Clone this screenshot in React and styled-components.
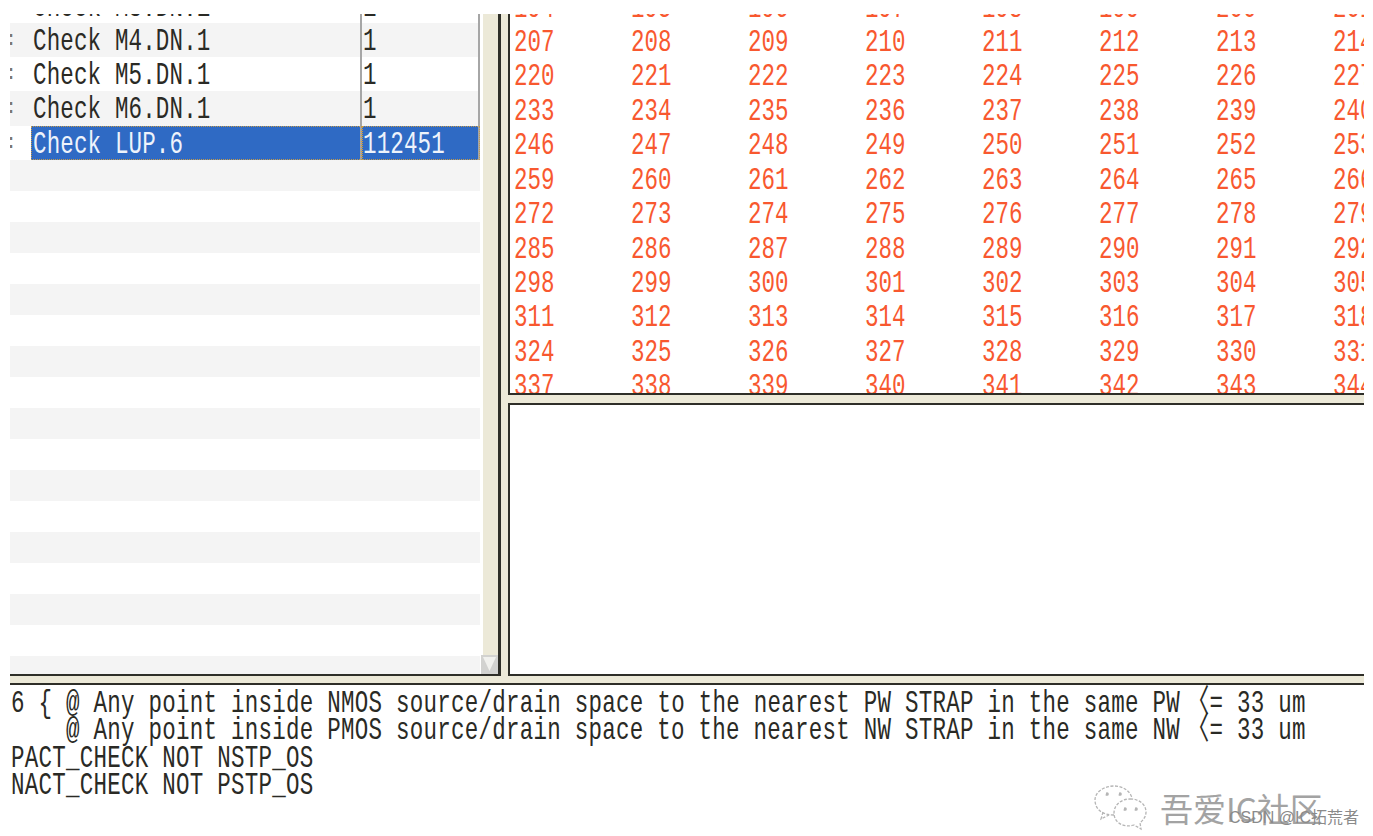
import React from 'react'
import styled, { createGlobalStyle } from 'styled-components'

const GlobalStyle = createGlobalStyle`
html, body { margin: 0; padding: 0; background: #fff; overflow: hidden; }
`

const MONO = `"Liberation Mono", "Noto Sans CJK SC", monospace`

const Page = styled.div`
position: relative;
width: 1373px;
height: 836px;
padding: 14px 9px 0 10px;
box-sizing: border-box;
font-family: ${MONO};
overflow: hidden;
`

const TopSplit = styled.div`
display: flex;
height: 662px;
`

const LeftPane = styled.div`
display: flex;
width: 488px;
border-right: 3px solid #2e2e28;
border-bottom: 2px solid #2e2e28;
flex: none;
`

const List = styled.div`
width: 470px;
margin-right: 3px;
overflow: hidden;
flex: none;
`

const ListInner = styled.div`
margin-top: -25.5px;
`

const Row = styled.div`
display: flex;
height: ${p => (p.$empty ? '31px' : '34.3px')};
background: ${p => (p.$striped ? '#f4f4f4' : '#fff')};
color: #2a2a25;
`

const RowHead = styled.div`
width: 21px;
flex: none;
overflow: hidden;
color: #77776f;
font-size: 20px;
line-height: 34px;
text-indent: -5px;
`

const Cell = styled.div`
box-sizing: border-box;
width: ${p => p.$w}px;
flex: none;
padding-left: ${p => p.$pad}px;
border-right: 2px solid #a6a6a6;
font-size: 22.5px;
letter-spacing: 0.15px;
line-height: 36px;
white-space: pre;
background: ${p => (p.$selected ? '#2f6ac4' : 'transparent')};
color: ${p => (p.$selected ? '#eef3fb' : 'inherit')};
outline: ${p => (p.$selected ? '1px dotted #c49a4a' : 'none')};
outline-offset: -1px;
`

const Tall = styled.span`
display: inline-block;
transform: scaleY(1.42);
`

const ScrollBar = styled.div`
width: 15px;
flex: none;
background: #ece9d8;
display: flex;
flex-direction: column;
justify-content: flex-end;
`

const ArrowButton = styled.div`
width: 17px;
height: 19px;
margin-left: -2px;
background: #e4e2da;
`

const Splitter = styled.div`
width: 7px;
flex: none;
background: #ece9d8;
`

const RightPane = styled.div`
flex: 1;
min-width: 0;
display: flex;
flex-direction: column;
`

const NumbersPane = styled.div`
height: 379px;
flex: none;
overflow: hidden;
border-left: 2px solid #2e2e28;
border-bottom: 2px solid #2e2e28;
`

const NumberGrid = styled.div`
display: grid;
grid-template-columns: repeat(13, 117px);
grid-auto-rows: 34.45px;
margin-top: -23.5px;
padding-left: 4px;
width: max-content;
`

const Num = styled.div`
color: #f8582f;
font-size: 22.5px;
line-height: 34px;
`

const HSplit = styled.div`
height: ${p => p.$h}px;
flex: none;
background: #ece9d8;
`

const DetailPane = styled.div`
flex: 1;
border-top: 2px solid #2e2e28;
border-left: 2px solid #2e2e28;
border-bottom: 2px solid #2e2e28;
`

const Output = styled.div`
border-top: 2px solid #2e2e28;
padding: 6px 0 0 1px;
color: #2a2a25;
font-size: 22.5px;
letter-spacing: 0.25px;
`

const Line = styled.div`
height: 27.4px;
line-height: 27.4px;
white-space: pre;
`

const Bracket = styled.span`
margin-left: -7px;
`

const Watermark = styled.div`
position: absolute;
left: 1094px;
top: 785px;
display: flex;
align-items: center;
gap: 13px;
color: #a3a3a3;
`

const WatermarkText = styled.span`
font-family: "Noto Sans CJK SC", sans-serif;
font-size: 33px;
line-height: 42px;
white-space: nowrap;
`

const Credit = styled.div`
position: absolute;
left: 1229px;
top: 807px;
font-family: "Liberation Sans", "Noto Sans CJK SC", sans-serif;
font-size: 16px;
line-height: 22px;
color: #8a8a8a;
white-space: nowrap;
`

const rows = [
  { name: 'Check M3.DN.1', value: '1' },
  { name: 'Check M4.DN.1', value: '1', striped: true },
  { name: 'Check M5.DN.1', value: '1' },
  { name: 'Check M6.DN.1', value: '1', striped: true },
  { name: 'Check LUP.6', value: '112451', selected: true },
]

const numbers = Array.from({ length: 13 * 12 }, (_, i) => 194 + i)
const emptyRows = Array.from({ length: 17 }, (_, i) => i)

const ArrowIcon = () => (
  <svg width="17" height="19" viewBox="0 0 17 19">
    <rect x="0" y="0" width="17" height="19" fill="#d2d2d0" />
    <polygon points="2,2 15,2 8.5,16" fill="#f1f1ee" />
  </svg>
)

const WeChatIcon = () => (
  <svg width="53" height="46" viewBox="0 0 53 46" fill="none" stroke="#b5b5b5" strokeWidth="1.3" strokeDasharray="3 1.5">
    <path d="M20 30 C8 30 1 24 1 15 C1 7 10 1 20 1 C29 1 36 6 38 13" />
    <path d="M9 27 L7 34 L15 30" />
    <path d="M36 14 C46 14 52 20 52 27 C52 32 49 35 46 38 L47 44 L40 40 C30 43 20 38 20 28 C20 20 27 14 36 14 Z" />
    <circle cx="13" cy="9" r="1.2" fill="#b5b5b5" />
    <circle cx="26" cy="9" r="1.2" fill="#b5b5b5" />
    <circle cx="31" cy="24" r="1.2" fill="#b5b5b5" />
    <circle cx="42" cy="24" r="1.2" fill="#b5b5b5" />
  </svg>
)

export default function App() {
  return (
    <Page>
      <GlobalStyle />
      <TopSplit>
        <LeftPane>
          <List>
            <ListInner>
              {rows.map(row => (
                <Row key={row.name} $striped={row.striped}>
                  <RowHead>:</RowHead>
                  <Cell $w={331} $pad={2} $selected={row.selected}><Tall>{row.name}</Tall></Cell>
                  <Cell $w={118} $pad={1} $selected={row.selected}><Tall>{row.value}</Tall></Cell>
                </Row>
              ))}
              {emptyRows.map(i => (
                <Row key={i} $empty $striped={i % 2 === 0} />
              ))}
            </ListInner>
          </List>
          <ScrollBar>
            <ArrowButton><ArrowIcon /></ArrowButton>
          </ScrollBar>
        </LeftPane>
        <Splitter />
        <RightPane>
          <NumbersPane>
            <NumberGrid>
              {numbers.map(n => (
                <Num key={n}><Tall>{n}</Tall></Num>
              ))}
            </NumberGrid>
          </NumbersPane>
          <HSplit $h={8} />
          <DetailPane />
        </RightPane>
      </TopSplit>
      <HSplit $h={7} />
      <Output>
        <Line><Tall>6 {'{'} @ Any point inside NMOS source/drain space to the nearest PW STRAP in the same PW <Bracket>〈</Bracket>= 33 um</Tall></Line>
        <Line><Tall>    @ Any point inside PMOS source/drain space to the nearest NW STRAP in the same NW <Bracket>〈</Bracket>= 33 um</Tall></Line>
        <Line><Tall>PACT_CHECK NOT NSTP_OS</Tall></Line>
        <Line><Tall>NACT_CHECK NOT PSTP_OS</Tall></Line>
      </Output>
      <Watermark>
        <WeChatIcon />
        <WatermarkText>吾爱IC社区</WatermarkText>
      </Watermark>
      <Credit>CSDN @IC拓荒者</Credit>
    </Page>
  )
}
